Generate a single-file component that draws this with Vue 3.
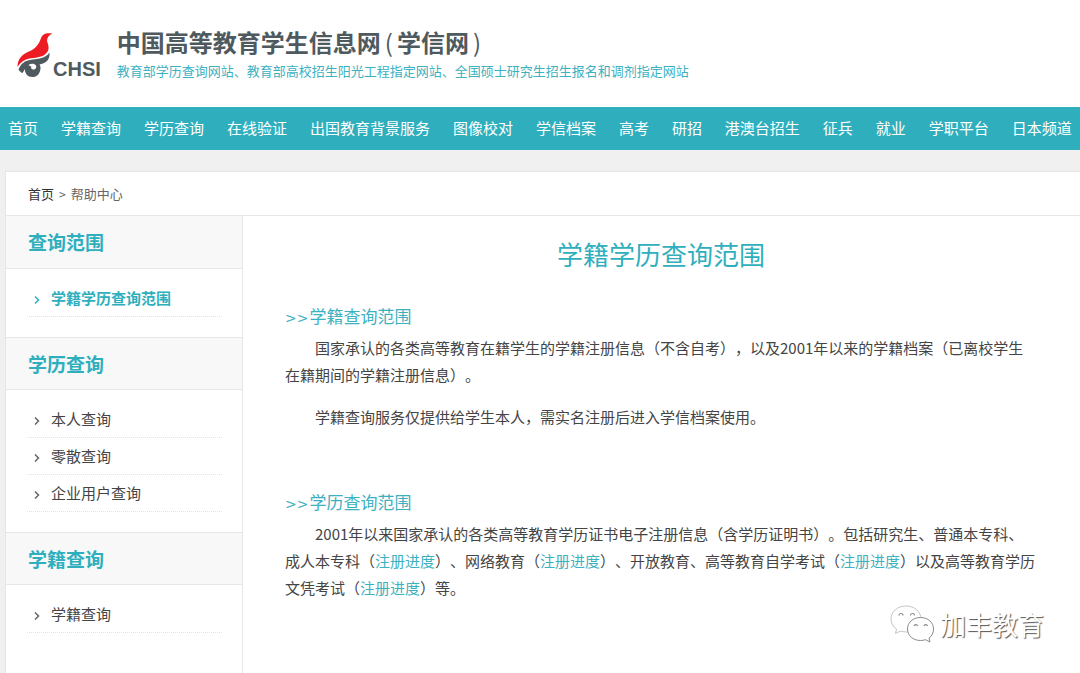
<template>
  <div class="page">
    <header class="header">
      <a href="#" class="logo" aria-label="CHSI">
        <svg class="logo-mark" viewBox="0 0 36 46" width="36" height="46">
          <path fill="#ed1c24" d="M0.500 35C0.500 27 5 22 13 19C19 16.500 22 12 24 6C25.500 1.500 29 0.500 35.500 1.500C32 3 30 5.500 30 9C31.500 14 33.500 18 28 22.500C22 27 12 25 7 28.500C4 30.500 2 32.500 0.500 35Z" />
          <path fill="#4f5a5e" d="M1.500 37.500C4 31.500 7.500 29 13 28C20 26.800 28 27 32.500 20.500C33 27 30 31 22.500 32.500C23.500 34 23.800 36 23.300 38C22.300 42.500 19.500 45 15.500 45C10.500 45 7.800 41.500 8 37L5.500 41C4.500 41 3 39.500 1.500 37.500Z" />
          <path fill="#fff" d="M11.500 33C14 31.200 17.500 31.300 19 33.500C19.800 35.500 18.500 37.500 16.500 37.500C14.500 37.500 13.500 36 14.300 34.300C13.200 34.300 12.500 33.800 11.500 33Z" />
        </svg>
        <span class="logo-text">CHSI</span>
      </a>
      <div class="site">
        <h1 class="site-name">中国高等教育学生信息网<span class="paren">(</span>学信网<span class="paren">)</span></h1>
        <p class="site-desc">教育部学历查询网站、教育部高校招生阳光工程指定网站、全国硕士研究生招生报名和调剂指定网站</p>
      </div>
    </header>

    <nav class="nav">
      <a v-for="item in navItems" :key="item" href="#">{{ item }}</a>
    </nav>

    <div class="panel">
      <div class="crumbs">
        <a href="#">首页</a>
        <span class="sep">&gt;</span>
        <span>帮助中心</span>
      </div>
      <div class="columns">
        <aside class="sidebar">
          <section v-for="group in groups" :key="group.title">
            <h2>{{ group.title }}</h2>
            <ul>
              <li v-for="link in group.links" :key="link" :class="{ active: link === current }">
                <svg viewBox="0 0 6 8" width="6" height="8">
                  <path d="M1 0.500L4.500 4L1 7.500" fill="none" stroke="currentColor" stroke-width="1.500" />
                </svg>
                <a href="#">{{ link }}</a>
              </li>
            </ul>
          </section>
        </aside>

        <main class="content">
          <h2 class="title">学籍学历查询范围</h2>
          <section class="block">
            <h3><span class="arrows">&gt;&gt;</span>学籍查询范围</h3>
            <p>国家承认的各类高等教育在籍学生的学籍注册信息（不含自考），以及2001年以来的学籍档案（已离校学生在籍期间的学籍注册信息）。</p>
            <p>学籍查询服务仅提供给学生本人，需实名注册后进入学信档案使用。</p>
          </section>
          <section class="block">
            <h3><span class="arrows">&gt;&gt;</span>学历查询范围</h3>
            <p>2001年以来国家承认的各类高等教育学历证书电子注册信息（含学历证明书）。包括研究生、普通本专科、成人本专科（<a href="#">注册进度</a>）、网络教育（<a href="#">注册进度</a>）、开放教育、高等教育自学考试（<a href="#">注册进度</a>）以及高等教育学历文凭考试（<a href="#">注册进度</a>）等。</p>
          </section>
        </main>
      </div>
    </div>

    <div class="watermark">
      <svg viewBox="0 0 44 38" width="44" height="38">
        <g fill="#fff" stroke-width="1">
          <path stroke="#c4c4c4" d="M16 1C7.500 1 1 6.800 1 14C1 18.200 3 21.700 6.500 24L5.500 28.500L10.500 26C12.200 26.600 14 27 16 27C24.500 27 31 21.200 31 14C31 6.800 24.500 1 16 1Z" />
          <path stroke="#8a8a8a" d="M30.500 12.500C23 12.500 17.500 17.500 17.500 24C17.500 30.500 23 35.500 30.500 35.500C32.300 35.500 34 35.200 35.500 34.700L40 37L39 33C42 31 43.500 27.800 43.500 24C43.500 17.500 38 12.500 30.500 12.500Z" />
        </g>
        <g fill="none" stroke="#8a8a8a" stroke-width="1.200">
          <path d="M9 10.500A2 2 0 0 1 13 10.500" />
          <path d="M20.500 10.500A2 2 0 0 1 24.500 10.500" />
          <path d="M24 21A1.800 1.800 0 0 1 27.500 21" />
          <path d="M34 21A1.800 1.800 0 0 1 37.500 21" />
        </g>
      </svg>
      <span>加丰教育</span>
    </div>
  </div>
</template>

<script setup>
import { ref } from 'vue';

const navItems = ref([
  '首页', '学籍查询', '学历查询', '在线验证', '出国教育背景服务', '图像校对', '学信档案',
  '高考', '研招', '港澳台招生', '征兵', '就业', '学职平台', '日本频道'
]);

const current = ref('学籍学历查询范围');

const groups = ref([
  { title: '查询范围', links: ['学籍学历查询范围'] },
  { title: '学历查询', links: ['本人查询', '零散查询', '企业用户查询'] },
  { title: '学籍查询', links: ['学籍查询'] }
]);
</script>

<style>
body {
  margin: 0;
  background: #f0f0f0;
}
</style>

<style scoped>
.page {
  position: relative;
  display: flex;
  flex-direction: column;
  min-height: 100vh;
  font-family: "Noto Sans CJK SC", sans-serif;
  font-size: 15px;
  color: #444;
  text-spacing-trim: space-all;
}

h1, h2, h3, p, ul {
  margin: 0;
  padding: 0;
}

a {
  color: inherit;
  text-decoration: none;
}

.header {
  display: flex;
  align-items: flex-start;
  gap: 16px;
  height: 107px;
  box-sizing: border-box;
  padding: 24px 17px 0;
  background: #fff;
}

.logo {
  display: flex;
  align-items: flex-end;
  padding-top: 8px;
  color: #4f5a5e;
}

.logo-text {
  font-family: "Liberation Sans", Arial, sans-serif;
  font-size: 20px;
  font-weight: bold;
  line-height: 18px;
}

.site-name {
  font-size: 24px;
  font-weight: 700;
  line-height: 36px;
  color: #4f5a5e;
}

.paren {
  padding: 0 4px;
  font-weight: 400;
}

.site-desc {
  font-size: 13px;
  line-height: 22px;
  color: #3cb1bf;
}

.nav {
  display: flex;
  justify-content: space-between;
  padding: 0 8px 2px;
  line-height: 41px;
  white-space: nowrap;
  color: #fff;
  background: #2fafbd;
}

.panel {
  display: flex;
  flex-direction: column;
  flex: 1;
  margin: 21px 0 0 5px;
  border-top: 1px solid #e6e6e6;
  border-left: 1px solid #e6e6e6;
  background: #fff;
}

.crumbs {
  display: flex;
  gap: 5px;
  padding: 0 22px;
  border-bottom: 1px solid #e6e6e6;
  font-size: 13px;
  line-height: 43px;
  color: #666;
}

.crumbs a {
  color: #333;
}

.sep {
  font-size: 12px;
}

.columns {
  display: flex;
  flex: 1;
}

.sidebar {
  width: 236px;
  flex-shrink: 0;
  border-right: 1px solid #e6e6e6;
}

.sidebar h2 {
  padding-left: 22px;
  border-bottom: 1px solid #e6e6e6;
  font-size: 19px;
  line-height: 52px;
  color: #2fafbd;
  background: #f8f8f8;
}

.sidebar section + section h2 {
  border-top: 1px solid #e6e6e6;
  line-height: 51px;
}

.sidebar ul {
  padding: 11px 20px 20px 21px;
  list-style: none;
}

.sidebar li {
  display: flex;
  align-items: center;
  gap: 11px;
  padding-left: 7px;
  border-bottom: 1px dotted #e2e2e2;
  line-height: 36px;
}

.sidebar li svg {
  margin-top: 3px;
  color: #666;
}

.sidebar li.active,
.sidebar li.active svg {
  font-weight: bold;
  color: #2fafbd;
}

.content {
  flex: 1;
  padding: 18px 43px 48px 42px;
}

.title {
  margin-bottom: 28px;
  font-size: 26px;
  font-weight: 400;
  line-height: 40px;
  text-align: center;
  color: #2fafbd;
}

.block + .block {
  margin-top: 58px;
}

.block h3 {
  margin-bottom: 5px;
  font-size: 17px;
  font-weight: 400;
  line-height: 27px;
  color: #3cb1bf;
}

.arrows {
  padding-right: 1px;
  font-family: "DejaVu Sans", sans-serif;
  font-size: 14px;
  line-height: 20px;
}

.block p {
  line-height: 27px;
  text-indent: 2em;
}

.block p + p {
  margin-top: 15px;
}

.block p a {
  color: #3cb1bf;
}

.watermark {
  position: absolute;
  right: 36px;
  bottom: 30px;
  display: flex;
  align-items: center;
  gap: 6px;
  font-size: 26px;
  line-height: 38px;
  color: #fff;
  text-shadow: 1px 1px 1px #555;
}
</style>
